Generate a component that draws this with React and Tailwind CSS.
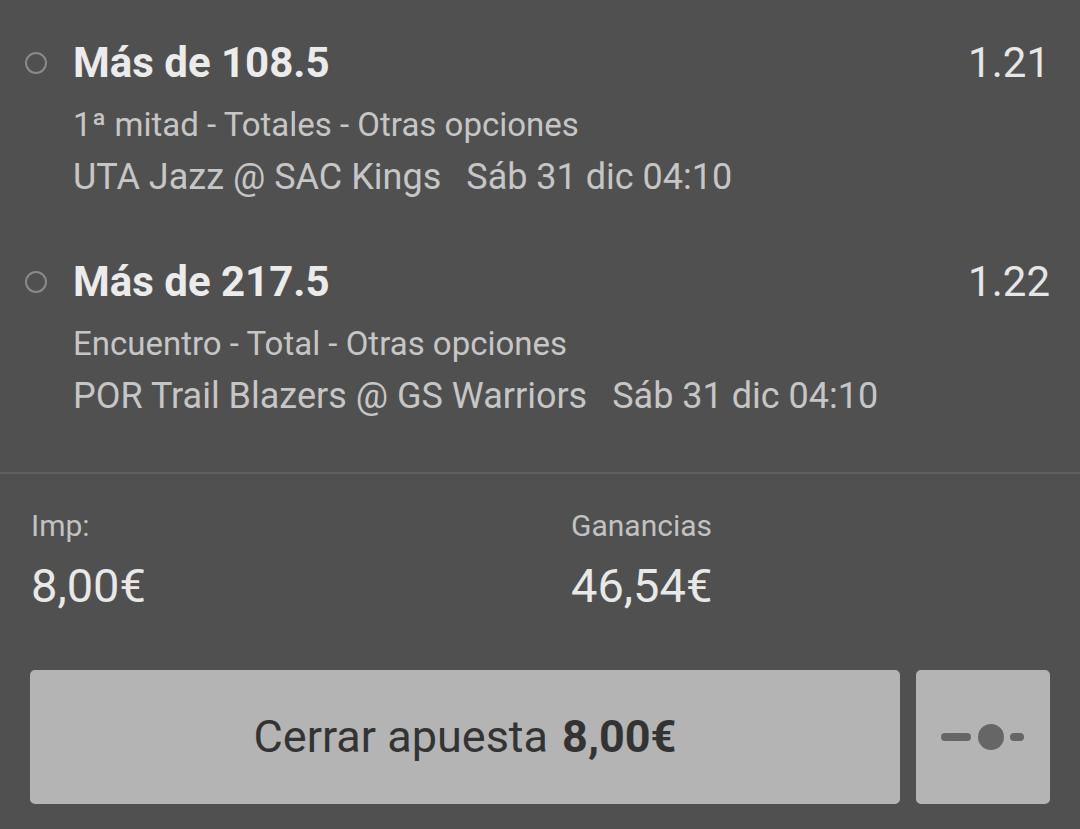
import React from 'react';

const bets = [
  {
    title: 'Más de 108.5',
    odds: '1.21',
    market: '1ª mitad - Totales - Otras opciones',
    teams: 'UTA Jazz @ SAC Kings',
    date: 'Sáb 31 dic 04:10',
  },
  {
    title: 'Más de 217.5',
    odds: '1.22',
    market: 'Encuentro - Total - Otras opciones',
    teams: 'POR Trail Blazers @ GS Warriors',
    date: 'Sáb 31 dic 04:10',
  },
];

const BetRow = ({ bet }) => (
  <div className="flex">
    <div className="w-[73px] shrink-0 flex justify-start pl-[25px] pt-[14px]">
      <div className="w-[22px] h-[22px] rounded-full border-[2.5px] border-[#8a8a8a]"></div>
    </div>
    <div className="flex-1">
      <div className="flex items-center justify-between pr-[30px]">
        <p className="text-[42px] leading-[50px] font-bold text-[#ebebeb]">{bet.title}</p>
        <p className="text-[42px] leading-[50px] text-[#e6e6e6]">{bet.odds}</p>
      </div>
      <p className="mt-[11px] text-[33px] leading-[52px] text-[#c6c6c6]">{bet.market}</p>
      <p className="text-[36px] leading-[52px] text-[#c6c6c6]">
        {bet.teams}
        <span className="ml-[25px]">{bet.date}</span>
      </p>
    </div>
  </div>
);

const SliderIcon = () => (
  <svg width="84" height="30" viewBox="0 0 84 30">
    <rect x="0" y="11" width="30" height="8" rx="4" fill="#666666" />
    <circle cx="50" cy="15" r="13" fill="#666666" />
    <rect x="69" y="11" width="14" height="8" rx="4" fill="#666666" />
  </svg>
);

export default function App() {
  return (
    <div
      className="w-[1080px] h-[829px] bg-[#505050] overflow-hidden"
      style={{ fontFamily: 'Roboto, "Liberation Sans", sans-serif' }}
    >
      <div className="pt-[38px] flex flex-col gap-[54px]">
        {bets.map((b) => (
          <BetRow key={b.title} bet={b} />
        ))}
      </div>

      <div className="mt-[50px] h-[2px] bg-[#5e5e5e]"></div>

      <div className="flex pl-[31px] pt-[34px]">
        <div className="w-[540px]">
          <p className="text-[30px] leading-[36px] text-[#c2c2c2]">Imp:</p>
          <p className="mt-[17px] text-[47px] leading-[50px] text-[#e8e8e8]">8,00€</p>
        </div>
        <div>
          <p className="text-[30px] leading-[36px] text-[#c2c2c2]">Ganancias</p>
          <p className="mt-[17px] text-[47px] leading-[50px] text-[#e8e8e8]">46,54€</p>
        </div>
      </div>

      <div className="flex gap-[16px] px-[30px] mt-[59px]">
        <button className="flex-1 h-[134px] rounded-[5px] bg-[#b4b4b4] flex items-center justify-center text-[45px] text-[#333333]">
          Cerrar apuesta <span className="ml-[14px] font-bold">8,00€</span>
        </button>
        <button className="w-[134px] h-[134px] rounded-[5px] bg-[#b4b4b4] flex items-center justify-center">
          <SliderIcon />
        </button>
      </div>
    </div>
  );
}
